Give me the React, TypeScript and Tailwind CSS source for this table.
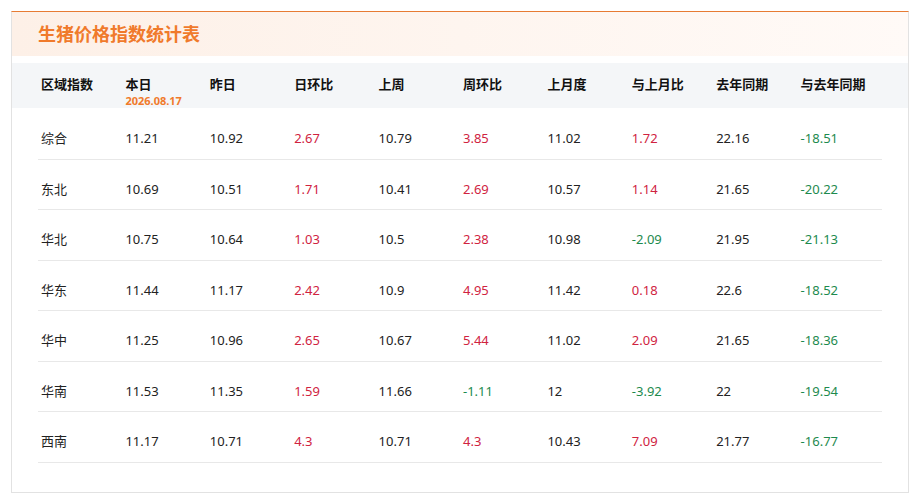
import React from 'react';

type Row = { region: string; values: number[] };

// 列：本日, 昨日, 日环比, 上周, 周环比, 上月度, 与上月比, 去年同期, 与去年同期
const rows: Row[] = [
    { region: '综合', values: [11.21, 10.92, 2.67, 10.79, 3.85, 11.02, 1.72, 22.16, -18.51] },
    { region: '东北', values: [10.69, 10.51, 1.71, 10.41, 2.69, 10.57, 1.14, 21.65, -20.22] },
    { region: '华北', values: [10.75, 10.64, 1.03, 10.5, 2.38, 10.98, -2.09, 21.95, -21.13] },
    { region: '华东', values: [11.44, 11.17, 2.42, 10.9, 4.95, 11.42, 0.18, 22.6, -18.52] },
    { region: '华中', values: [11.25, 10.96, 2.65, 10.67, 5.44, 11.02, 2.09, 21.65, -18.36] },
    { region: '华南', values: [11.53, 11.35, 1.59, 11.66, -1.11, 12, -3.92, 22, -19.54] },
    { region: '西南', values: [11.17, 10.71, 4.3, 10.71, 4.3, 10.43, 7.09, 21.77, -16.77] },
];

const headers = ['区域指数', '本日', '昨日', '日环比', '上周', '周环比', '上月度', '与上月比', '去年同期', '与去年同期'];
const changeCols = [2, 4, 6, 8];

function Cell({ value, isChange }: { value: number; isChange: boolean }) {
    let color = 'text-[#222]';
    if (isChange) color = value < 0 ? 'text-[#1d8a4e]' : 'text-[#d0233f]';
    return <div className={`pl-[3px] ${color}`}>{value}</div>;
}

export default function App() {
    return (
        <div className="pt-[11px] pl-[11px] bg-white min-h-screen" style={{ fontFamily: '"Noto Sans", "Noto Sans CJK SC", sans-serif' }}>
            <div className="w-[898px] h-[482px] border border-[#e2e2e2] border-t-[#e77b33] bg-white">
                {/* 标题 */}
                <div className="h-[44px] px-[26px] flex items-center bg-gradient-to-r from-[#fdf0e7] to-[#fffaf7]">
                    <h2 className="text-[18px] font-bold text-[#f07a2b]">生猪价格指数统计表</h2>
                </div>

                {/* 表头 */}
                <div className="mt-[7px] h-[45px] bg-[#f4f6f8] px-[26px]">
                    <div className="grid grid-cols-10 pt-[11px] text-[13px] font-bold text-[#111]">
                        {headers.map((h, i) => (
                            <div key={h} className="pl-[3px] leading-[20px]">
                                {h}
                                {i === 1 && (
                                    <div className="text-[11px] leading-[13px] text-[#f07a2b] font-bold">2026.08.17</div>
                                )}
                            </div>
                        ))}
                    </div>
                </div>

                {/* 数据行 */}
                <div className="px-[26px] pt-[1px]">
                    {rows.map((r) => (
                        <div key={r.region} className="grid grid-cols-10 h-[50.5px] pt-[19px] border-b border-[#e8e8e8] text-[13px] leading-[20px]">
                            <div className="pl-[3px] text-[#222]">{r.region}</div>
                            {r.values.map((v, i) => (
                                <Cell key={i} value={v} isChange={changeCols.includes(i)} />
                            ))}
                        </div>
                    ))}
                </div>
            </div>
        </div>
    );
}
